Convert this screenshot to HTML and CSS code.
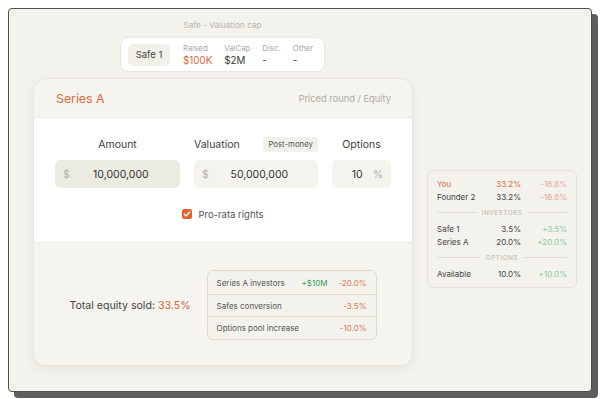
FILE: index.html
```html
<!DOCTYPE html>
<html>
<head>
<meta charset="utf-8">
<link rel="stylesheet" href="styles.css">
</head>
<body>
<div class="frame">
  <div class="content">
    <div class="safe-group">
      <div class="safe-label">Safe - Valuation cap</div>
      <div class="safe-card">
        <div class="chip">Safe 1</div>
        <div class="fields">
          <div class="field"><div class="f-label">Raised</div><div class="f-value orange">$100K</div></div>
          <div class="field"><div class="f-label">ValCap</div><div class="f-value">$2M</div></div>
          <div class="field"><div class="f-label">Disc.</div><div class="f-value">-</div></div>
          <div class="field"><div class="f-label">Other</div><div class="f-value">-</div></div>
        </div>
      </div>
    </div>
    <div class="row">
      <div class="round-card">
        <div class="round-head">
          <span class="round-title">Series A</span>
          <span class="round-type">Priced round / Equity</span>
        </div>
        <div class="round-body">
          <div class="inputs">
            <div class="lbl center">Amount</div>
            <div class="lbl split"><span>Valuation</span><span class="tag">Post-money</span></div>
            <div class="lbl center">Options</div>
            <div class="box box-active"><span class="unit">$</span><span class="val">10,000,000</span></div>
            <div class="box"><span class="unit">$</span><span class="val">50,000,000</span></div>
            <div class="box box-opt"><span class="val right">10</span><span class="unit">%</span></div>
          </div>
          <div class="check-row">
            <span class="checkbox"><svg width="8" height="8" viewBox="0 0 8 8"><path d="M1.4 4.2 L3.2 5.9 L6.6 2.1" fill="none" stroke="#fff" stroke-width="1.4" stroke-linecap="round" stroke-linejoin="round"/></svg></span>
            <span>Pro-rata rights</span>
          </div>
        </div>
        <div class="round-foot">
          <div class="total">Total equity sold: <span class="orange">33.5%</span></div>
          <div class="breakdown">
            <div class="b-row"><span class="b-name">Series A investors</span><span class="green">+$10M</span><span class="neg">-20.0%</span></div>
            <div class="b-row"><span class="b-name">Safes conversion</span><span class="neg">-3.5%</span></div>
            <div class="b-row"><span class="b-name">Options pool increase</span><span class="neg">-10.0%</span></div>
          </div>
        </div>
      </div>
      <div class="cap-card">
        <div class="c-row you"><span>You</span><span class="c-val">33.2%</span><span class="c-delta pink">-16.8%</span></div>
        <div class="c-row"><span>Founder 2</span><span class="c-val">33.2%</span><span class="c-delta pink">-16.8%</span></div>
        <div class="divider"><span>INVESTORS</span></div>
        <div class="c-row"><span>Safe 1</span><span class="c-val">3.5%</span><span class="c-delta lgreen">+3.5%</span></div>
        <div class="c-row"><span>Series A</span><span class="c-val">20.0%</span><span class="c-delta lgreen">+20.0%</span></div>
        <div class="divider"><span>OPTIONS</span></div>
        <div class="c-row"><span>Available</span><span class="c-val">10.0%</span><span class="c-delta lgreen">+10.0%</span></div>
      </div>
    </div>
  </div>
</div>
</body>
</html>
```

FILE: styles.css
```css
* { box-sizing: border-box; }
html, body { margin: 0; padding: 0; background: #fff; }
body {
  font-family: Inter, "Noto Sans", sans-serif;
  color: #3a3a38;
  padding: 8px;
}
.frame {
  width: 584px;
  height: 384px;
  border: 1px solid #4d4d4d;
  border-radius: 4px;
  background: #f3f2ec;
  box-shadow: 6px 6px 0 #5e5e5e;
  overflow: hidden;
}
.content {
  padding: 11px 0 0 24px;
  display: flex;
  flex-direction: column;
}
.orange { color: #d9683a; }
.green { color: #3f9a58; }

/* safe */
.safe-group { margin-left: 87px; width: 205px; }
.safe-label {
  text-align: center;
  font-size: 8.2px;
  line-height: 11px;
  color: #b8b6ae;
  margin-bottom: 6px;
}
.safe-card {
  height: 35px;
  background: #fff;
  border: 1px solid #e8e6de;
  border-radius: 8px;
  display: flex;
  align-items: center;
  padding: 0 7px;
}
.chip {
  width: 42px;
  height: 22px;
  border-radius: 5px;
  background: #f1f0e9;
  font-size: 9.5px;
  display: flex;
  align-items: center;
  justify-content: center;
  color: #444;
}
.fields { display: flex; gap: 12px; margin-left: 13px; }
.f-label { font-size: 7.8px; line-height: 11px; color: #aaa8a0; }
.f-value { font-size: 9.8px; line-height: 13px; color: #3a3a38; }
.f-value.orange { color: #d9683a; }

/* row */
.row { display: flex; align-items: flex-start; margin-top: 6px; }
.round-card {
  width: 380px;
  height: 288px;
  border: 1px solid #e5e3db;
  border-radius: 12px;
  overflow: hidden;
  background: #f5f4ef;
  box-shadow: 0 4px 10px rgba(60, 55, 40, 0.06);
  display: flex;
  flex-direction: column;
}
.round-head {
  height: 39px;
  padding: 0 21px 0 22px;
  display: flex;
  align-items: center;
  justify-content: space-between;
  border-bottom: 1px solid #ebe9e1;
}
.round-title { font-size: 12.3px; color: #d9683a; }
.round-type { font-size: 9.3px; color: #adaba3; }
.round-body {
  background: #fff;
  padding: 18px 21px 23px 21px;
}
.inputs {
  display: grid;
  grid-template-columns: 125px 124px 59px;
  column-gap: 14px;
  row-gap: 8px;
}
.lbl {
  height: 16px;
  font-size: 10.5px;
  color: #3d3d3b;
  display: flex;
  align-items: center;
}
.lbl.center { justify-content: center; }
.lbl.split { justify-content: space-between; }
.tag {
  font-size: 7.8px;
  color: #555;
  background: #f1f0ea;
  border-radius: 3px;
  height: 15px;
  padding: 0 5px;
  display: flex;
  align-items: center;
}
.box {
  height: 28px;
  border-radius: 5px;
  background: #f4f3ee;
  display: flex;
  align-items: center;
  padding: 0 8px;
  font-size: 10.5px;
  color: #333;
}
.box-active { background: #ecebe2; }
.unit { color: #b3b1a9; font-size: 10.5px; }
.val { flex: 1; text-align: center; }
.val.right { text-align: right; padding-right: 10px; }
.check-row {
  margin-top: 21px;
  display: flex;
  align-items: center;
  justify-content: center;
  gap: 6px;
  font-size: 9.5px;
  color: #555;
  height: 10px;
}
.checkbox {
  width: 10px;
  height: 10px;
  border-radius: 2px;
  background: #e0652c;
  display: flex;
  align-items: center;
  justify-content: center;
}
.round-foot {
  flex: 1;
  border-top: 1px solid #ebe9e1;
  display: flex;
  align-items: center;
  justify-content: center;
  gap: 16px;
  padding-top: 2px;
}
.total { font-size: 10.6px; color: #444; white-space: nowrap; }
.breakdown {
  width: 170px;
  border: 1px solid #dcd9cd;
  border-radius: 6px;
  background: #f3f2ec;
}
.b-row {
  height: 22.5px;
  display: flex;
  align-items: center;
  gap: 11px;
  padding: 0 9px;
  font-size: 8px;
  color: #555;
  white-space: nowrap;
}
.b-row + .b-row { border-top: 1px solid #dedbd0; }
.b-name { flex: 1; }
.neg { color: #e07a4e; }

/* cap table */
.cap-card {
  width: 150px;
  margin-left: 14px;
  margin-top: 92px;
  background: #f3f2ec;
  border: 1px solid #e4e2da;
  border-radius: 6px;
  padding: 6px 9px 7px 9px;
}
.c-row {
  display: grid;
  grid-template-columns: 1fr 40px 46px;
  height: 13px;
  align-items: center;
  font-size: 8px;
  color: #444;
  white-space: nowrap;
}
.c-val { text-align: right; }
.c-delta { text-align: right; }
.you { color: #dc6d3c; }
.pink { color: #e9a595; }
.lgreen { color: #8ccb9d; }
.divider {
  height: 19px;
  display: flex;
  align-items: center;
  gap: 6px;
  font-size: 6.3px;
  letter-spacing: 0.6px;
  color: #b7b5ad;
}
.divider::before, .divider::after {
  content: "";
  flex: 1;
  height: 1px;
  background: #dddbd2;
}
```
